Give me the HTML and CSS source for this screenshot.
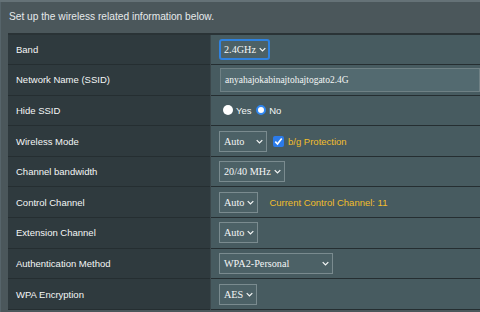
FILE: index.html
```html
<!DOCTYPE html>
<html>
<head>
<meta charset="utf-8">
<link rel="stylesheet" href="styles.css">
</head>
<body>
<div class="page">
  <p class="intro">Set up the wireless related information below.</p>
  <table class="form">
    <tr>
      <th>Band</th>
      <td><span class="sel focus">2.4GHz<svg class="chev" viewBox="0 0 10 6"><path d="M1 1l4 4 4-4"/></svg></span></td>
    </tr>
    <tr>
      <th>Network Name (SSID)</th>
      <td><span class="input">anyahajokabinajtohajtogato2.4G</span></td>
    </tr>
    <tr>
      <th>Hide SSID</th>
      <td class="radios">
        <span class="radio"></span><span class="rlabel">Yes</span>
        <span class="radio on"></span><span class="rlabel">No</span>
      </td>
    </tr>
    <tr>
      <th>Wireless Mode</th>
      <td><span class="sel w-mode">Auto<svg class="chev" viewBox="0 0 10 6"><path d="M1 1l4 4 4-4"/></svg></span><span class="check"><svg viewBox="0 0 12 12"><path d="M2.5 6.2l2.4 2.6 4.6-6"/></svg></span><span class="note">b/g Protection</span></td>
    </tr>
    <tr>
      <th>Channel bandwidth</th>
      <td><span class="sel">20/40 MHz<svg class="chev" viewBox="0 0 10 6"><path d="M1 1l4 4 4-4"/></svg></span></td>
    </tr>
    <tr>
      <th>Control Channel</th>
      <td><span class="sel">Auto<svg class="chev" viewBox="0 0 10 6"><path d="M1 1l4 4 4-4"/></svg></span><span class="note wide">Current Control Channel: 11</span></td>
    </tr>
    <tr>
      <th>Extension Channel</th>
      <td><span class="sel">Auto<svg class="chev" viewBox="0 0 10 6"><path d="M1 1l4 4 4-4"/></svg></span></td>
    </tr>
    <tr>
      <th>Authentication Method</th>
      <td><span class="sel w-auth">WPA2-Personal<svg class="chev" viewBox="0 0 10 6"><path d="M1 1l4 4 4-4"/></svg></span></td>
    </tr>
    <tr>
      <th>WPA Encryption</th>
      <td><span class="sel">AES<svg class="chev" viewBox="0 0 10 6"><path d="M1 1l4 4 4-4"/></svg></span></td>
    </tr>
  </table>
</div>
</body>
</html>
```
FILE: styles.css
```css
html, body {
  margin: 0;
  padding: 0;
  background: #4b575b;
  overflow: hidden;
}
.page {
  height: 312px;
  border-top: 2px solid #657277;
  padding: 0 0 0 8px;
  font-family: "Liberation Sans", Arial, sans-serif;
  box-shadow: inset 1px 0 0 #56646a;
}
.intro {
  margin: 0;
  padding: 8px 0 0 1px;
  height: 23px;
  color: #e6eaeb;
  font-size: 10.2px;
  line-height: 14px;
}
.form {
  border-collapse: collapse;
  width: 472px;
  border-top: 2px solid #2a3336;
}
.form tr {
  height: 30.6px;
  border-bottom: 1px solid #252e31;
}
.form th {
  width: 196px;
  background: #2f3a3e;
  color: #f4f6f6;
  font-size: 9.5px;
  font-weight: normal;
  text-align: left;
  padding: 0 0 0 8px;
  border-right: 1px solid #3b474b;
}
.form td {
  background: #475b60;
  padding: 0 0 0 8px;
  white-space: nowrap;
}
.sel {
  display: inline-flex;
  align-items: center;
  box-sizing: border-box;
  height: 21px;
  padding: 0 3px 0 4px;
  border: 1px solid #7a8b8f;
  background: #4c6166;
  color: #f4f6f6;
  font-family: "Liberation Serif", "Times New Roman", serif;
  font-size: 10.2px;
  vertical-align: middle;
}
.sel .chev {
  width: 7px;
  height: 5px;
  margin-left: 3px;
  fill: none;
  stroke: #f4f6f6;
  stroke-width: 1.8;
}
.sel.focus {
  border: 2px solid #2f82e0;
  border-radius: 3px;
  padding: 0 2px 0 3px;
  height: 21px;
}
.w-mode { width: 48px; justify-content: space-between; }
.w-auth { width: 114px; justify-content: space-between; }
.input {
  display: inline-block;
  box-sizing: border-box;
  width: 260px;
  height: 24px;
  line-height: 22px;
  margin-left: 1px;
  padding-left: 4px;
  border: 1px solid #6f8185;
  background: #536a70;
  color: #f4f6f6;
  font-family: "Liberation Serif", "Times New Roman", serif;
  font-size: 9.5px;
  vertical-align: middle;
}
.radios {
  font-size: 9.5px;
  color: #f4f6f6;
}
.radio {
  display: inline-block;
  box-sizing: border-box;
  width: 10px;
  height: 10px;
  border-radius: 50%;
  background: #fff;
  vertical-align: -1px;
  margin-left: 4px;
}
.radio.on {
  border: 2px solid #2f86f0;
  background: #fff;
  margin-left: 2px;
}
.rlabel {
  margin-left: 3px;
}
.check {
  display: inline-block;
  width: 11px;
  height: 11px;
  border-radius: 2px;
  background: #2b7bea;
  vertical-align: middle;
  margin-left: 6px;
}
.check svg {
  display: block;
  width: 11px;
  height: 11px;
  fill: none;
  stroke: #fff;
  stroke-width: 1.8;
}
.note {
  color: #f2be2c;
  font-size: 9.5px;
  margin-left: 4px;
  vertical-align: middle;
}
.note.wide { margin-left: 11px; }
```
